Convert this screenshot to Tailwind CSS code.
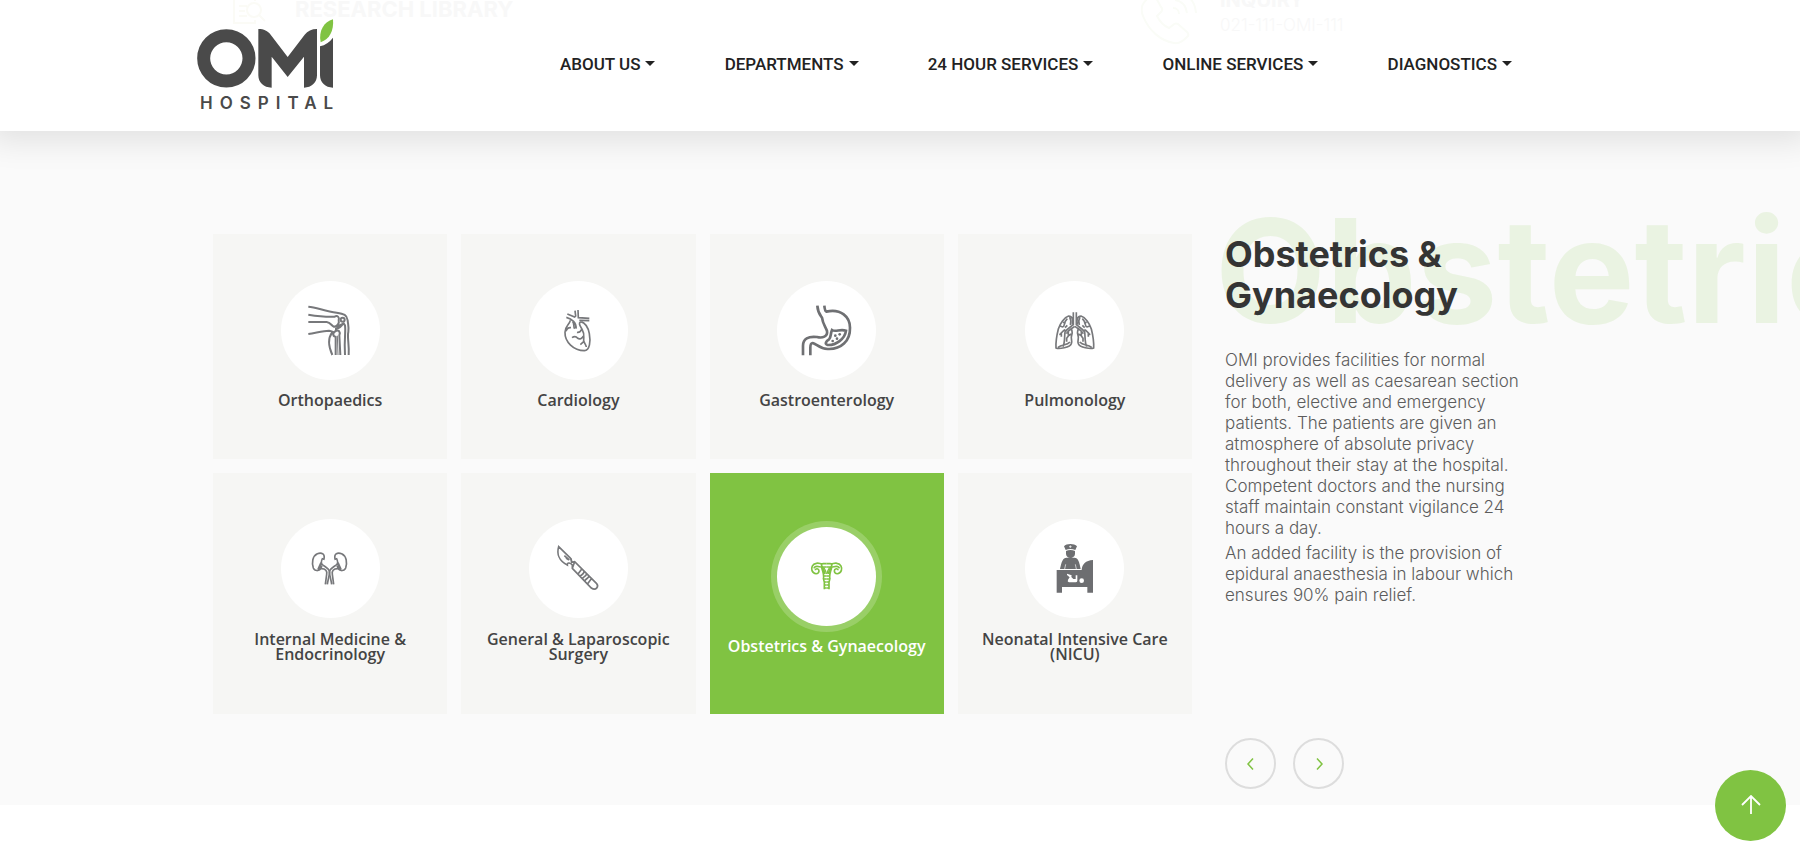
<!DOCTYPE html>
<html lang="en">
<head>
<meta charset="utf-8">
<meta name="viewport" content="width=device-width, initial-scale=1">
<title>OMI Hospital</title>
<script src="https://cdn.jsdelivr.net/npm/@tailwindcss/browser@4"></script>
</head>
<body class="bg-white font-['Inter',sans-serif] text-[#343434] overflow-x-hidden">

<header class="relative z-10 bg-white shadow-[0_0_30px_10px_rgba(0,0,0,0.1)]">
  <!-- Contact strip fading out behind the bar -->
  <div class="absolute inset-x-0 top-0 h-12 overflow-hidden pointer-events-none text-[#f8f8f8]">
    <div class="absolute left-[233px] -top-[7px] flex items-center gap-[29px]">
      <svg class="w-[33px] h-[30px]" viewBox="0 0 33 30" fill="none" stroke="#fbfbf6" stroke-width="2"><path d="M22 26v3H1V1h21v6M6 12h8M6 17h6M6 22h8"/><circle cx="21" cy="16" r="7"/><path d="M26 21l6 6"/></svg>
      <span class="text-[22px] leading-8 font-bold">RESEARCH LIBRARY</span>
    </div>
    <div class="absolute left-[1141px] -top-3 flex gap-[22px]">
      <svg class="w-[57px] h-[57px]" viewBox="0 0 57 57" fill="none" stroke="#fafcf7" stroke-width="2"><path d="M12 6c-9 7-14 12-10 22 6 15 18 25 31 27 6 1 10-3 14-7 1-2 0-3-1-4l-9-8c-2-1-3-1-5 1l-4 3c-5-2-9-6-12-12l4-4c2-2 1-4 0-5l-6-11M32 20c4 0 6 3 6 6M34 12c7 1 11 6 12 13M36 4c11 1 18 9 19 21"/></svg>
      <div><p class="text-xl leading-6 font-bold">INQUIRY</p><p class="text-[17px] leading-[26px] font-light">021-111-OMI-111</p></div>
    </div>
  </div>

  <div class="relative flex h-[131px] items-center pl-[197px] pr-[288px] pb-1">
    <a href="#" aria-label="OMI Hospital" class="block w-[138px] pt-0.5 text-[#4a4a4a]">
      <svg class="block w-[138px] h-[70px]" viewBox="51 57 414 210" aria-hidden="true">
        <circle cx="139" cy="175" r="68" fill="none" stroke="#4a4a4a" stroke-width="39"/>
        <path fill="#4a4a4a" d="M235 87C252 87 263 93 272 104L323 171L374 104C383 93 395 87 411 87V226C411 247 395 263 372 263V170L323 231L275 170V263C251 263 235 247 235 226Z"/>
        <path fill="#4a4a4a" d="M420 139Q444 133 459 113V263C436 263 420 247 420 226Z"/>
        <path fill="#80c342" d="M422 127C415 93 432 65 459 58C462 92 449 118 422 127Z"/>
      </svg>
      <span class="block pl-[3px] pt-1.5 text-[17px] leading-4 font-semibold tracking-[7px] whitespace-nowrap">HOSPITAL</span>
    </a>
    <nav class="ml-auto flex items-center justify-between w-[952px] font-['Roboto',sans-serif] text-[17px] leading-6 font-medium text-[#222]">
      <a href="#" class="flex items-center gap-[5px]">ABOUT US <span class="border-x-[5px] border-t-[5px] border-x-transparent border-t-[#222]"></span></a>
      <a href="#" class="flex items-center gap-[5px]">DEPARTMENTS <span class="border-x-[5px] border-t-[5px] border-x-transparent border-t-[#222]"></span></a>
      <a href="#" class="flex items-center gap-[5px]">24 HOUR SERVICES <span class="border-x-[5px] border-t-[5px] border-x-transparent border-t-[#222]"></span></a>
      <a href="#" class="flex items-center gap-[5px]">ONLINE SERVICES <span class="border-x-[5px] border-t-[5px] border-x-transparent border-t-[#222]"></span></a>
      <a href="#" class="flex items-center gap-[5px]">DIAGNOSTICS <span class="border-x-[5px] border-t-[5px] border-x-transparent border-t-[#222]"></span></a>
    </nav>
  </div>
</header>

<main class="flex gap-[33px] bg-[#fafafa] pl-[213px] pt-[103px] pb-4 overflow-hidden">
  <div class="grid w-[979px] shrink-0 grid-cols-4 grid-rows-[225px_241px] content-start gap-[14px] font-['Open_Sans',sans-serif] text-base leading-[15px] font-semibold text-[#444]">

    <button type="button" class="flex flex-col items-center bg-[#f6f6f4] px-4 pt-[47px]">
      <svg class="size-[99px] shrink-0 rounded-full bg-white" viewBox="243 182 297 297" fill="none" stroke="#77787b" stroke-width="6" aria-hidden="true">
        <path d="M325 259C350 261 375 273 410 277C432 280 441 284 443 300C444 312 447 318 445 335C441 350 448 370 446 404M325 283C350 287 380 290 404 289C412 284 419 290 416 300C419 310 411 319 401 319C394 316 392 306 380 305H325M325 341C350 337 370 331 387 331C405 334 402 341 396 337C383 355 387 382 397 404M404 319C418 319 423 313 431 309L435 315C438 335 432 350 435 404M405 326C418 326 422 318 428 312M407 404V350C396 346 399 336 407 332C416 328 422 334 418 345L421 404"/>
        <path stroke-width="3" d="M412 346L414 404"/>
        <circle cx="428" cy="298" r="6"/>
      </svg>
      <span class="mt-[13px]">Orthopaedics</span>
    </button>

    <button type="button" class="flex flex-col items-center bg-[#f6f6f4] px-4 pt-[47px]">
      <svg class="size-[99px] shrink-0 rounded-full bg-white" viewBox="207 182 297 297" fill="none" stroke="#77787b" stroke-width="5" aria-hidden="true">
        <path d="M322 281L344 290L347 287L345 271M354 269L355 292L388 294M388 301L358 300M319 291C336 295 350 308 348 325M338 304C344 310 339 318 344 325M331 300C328 315 315 316 315 336C314 365 341 391 373 391C390 390 392 363 388 340C384 319 377 308 362 304C353 309 363 319 367 329C374 340 371 347 371 361C372 368 378 372 379 380M318 333C321 323 326 321 333 322M336 352C345 346 350 350 353 354C360 358 368 353 370 347M351 336C359 338 363 331 365 327M361 373L371 364"/>
      </svg>
      <span class="mt-[13px]">Cardiology</span>
    </button>

    <button type="button" class="flex flex-col items-center bg-[#f6f6f4] px-4 pt-[47px]">
      <svg class="size-[99px] shrink-0 rounded-full bg-white" viewBox="231 182 297 297" fill="none" stroke="#6f7073" stroke-width="8" aria-hidden="true">
        <path d="M352 256C353 276 358 281 366 292C368 310 377 320 381 332C384 349 367 354 351 350C325 347 309 355 309 376V405M373 256C374 267 375 272 379 274C423 264 450 290 450 322C451 362 423 388 383 386C359 385 350 371 338 368C331 368 331 375 331 382V405M396 329C407 336 420 325 438 331C435 356 408 375 383 374C372 371 379 362 387 357C394 350 391 340 396 329Z"/>
        <g fill="#6f7073" stroke="none"><circle cx="406" cy="346" r="4"/><circle cx="419" cy="342" r="4"/><circle cx="398" cy="362" r="4"/><circle cx="411" cy="355" r="4"/></g>
      </svg>
      <span class="mt-[13px]">Gastroenterology</span>
    </button>

    <button type="button" class="flex flex-col items-center bg-[#f6f6f4] px-4 pt-[47px]">
      <svg class="size-[99px] shrink-0 rounded-full bg-white" viewBox="225 182 297 297" fill="none" stroke="#77787b" stroke-width="5" aria-hidden="true">
        <g id="lung">
          <path d="M370 276V313C361 321 353 323 345 335C343 351 345 366 339 379M374 318C365 326 357 326 349 340M367 313C370 298 367 287 356 287C343 291 330 310 325 326C320 346 317 366 318 383C327 387 360 381 364 370C368 360 361 355 365 345C369 335 365 332 365 327M324 381C337 372 350 376 360 365M352 295C340 306 345 320 338 320L330 317M352 315L345 322M347 309L339 306M346 328C338 330 335 340 328 343M334 336V349M355 331V347L350 354V364M364 341L355 346"/>
          <path d="M359 290C363 297 363 307 361 314" />
        </g>
        <use href="#lung" transform="matrix(-1 0 0 1 749 0)"/>
      </svg>
      <span class="mt-[13px]">Pulmonology</span>
    </button>

    <button type="button" class="flex flex-col items-center bg-[#f6f6f4] px-4 pt-[46px]">
      <svg class="size-[99px] shrink-0 rounded-full bg-white" viewBox="243 177 297 297" fill="none" stroke="#77787b" stroke-width="5" aria-hidden="true">
        <g id="kidney">
          <path d="M371 300C377 282 365 276 352 281C337 288 335 308 340 324C344 334 356 334 364 325M368 294C364 302 362 310 367 314C376 321 388 325 389 337C387 351 383 363 382 373M363 308L354 328M363 313L359 328M366 318L361 327M364 326C377 326 382 333 380 343L376 373"/>
        </g>
        <use href="#kidney" transform="matrix(-1 0 0 1 777 0)"/>
      </svg>
      <span class="mt-[14px]">Internal Medicine &amp; Endocrinology</span>
    </button>

    <button type="button" class="flex flex-col items-center bg-[#f6f6f4] px-4 pt-[46px]">
      <svg class="size-[99px] shrink-0 rounded-full bg-white" viewBox="987 177 297 297" fill="none" stroke="#77787b" stroke-width="5" aria-hidden="true">
        <path d="M1076 260C1070 280 1076 302 1102 315C1101 305 1112 309 1117 315V325L1174 384C1188 394 1197 379 1190 371L1124 305L1115 307L1112 295ZM1076 260L1112 295M1124 305L1117 325M1113 296L1116 309M1093 287L1108 300M1098 294L1105 299M1146 326L1134 342M1153 333C1151 343 1147 343 1141 348M1160 341C1157 350 1152 349 1148 355M1167 348C1164 356 1158 356 1155 362M1175 355L1163 371"/>
      </svg>
      <span class="mt-[14px]">General &amp; Laparoscopic Surgery</span>
    </button>

    <button type="button" aria-pressed="true" class="flex flex-col items-center bg-[#80c342] px-4 pt-[54px] text-white">
      <svg class="size-[99px] shrink-0 rounded-full bg-white ring-6 ring-white/20" viewBox="231 201 297 297" fill="none" stroke="#80c342" stroke-width="5" aria-hidden="true">
        <g id="tube">
          <path d="M380 311H370C363 313 357 308 349 310C337 312 333 323 336 332C341 344 356 344 357 333C357 325 346 324 346 331M380 321H370C360 323 345 313 342 325M363 311C366 323 374 328 374 342M365 321C367 334 371 337 371 351C368 357 373 362 373 367V388"/>
          <path stroke-width="4" d="M371 322C376 330 379 334 379 342M371 348H380M371 357H380M373 366H380M373 375H380M373 384H380"/>
        </g>
        <use href="#tube" transform="matrix(-1 0 0 1 760 0)"/>
      </svg>
      <span class="mt-[13px] whitespace-nowrap">Obstetrics &amp; Gynaecology</span>
    </button>

    <button type="button" class="flex flex-col items-center bg-[#f6f6f4] px-4 pt-[46px]">
      <svg class="size-[99px] shrink-0 rounded-full bg-white" viewBox="975 177 297 297" fill="#6d6e71" aria-hidden="true">
        <path d="M1092 259C1099 250 1123 250 1131 259L1126 270C1116 266 1106 266 1097 270Z"/>
        <path d="M1098 273C1106 269 1117 269 1125 273V281C1125 288 1118 294 1111 294S1098 288 1098 281Z"/>
        <path d="M1080 327C1084 307 1088 293 1100 293H1123C1135 293 1138 307 1142 327Z"/>
        <path d="M1070 330H1145C1146 313 1157 301 1179 300V398H1162V381H1086V398H1070Z"/>
        <path fill="none" stroke="#fff" stroke-width="2" d="M1097 313L1094 327M1126 313L1129 327M1111 256V264M1107 260H1115"/>
        <path fill="#fff" d="M1101 341L1115 346L1114 351L1120 357H1127V346H1132V363Q1131 367 1127 367H1107Q1101 365 1104 359L1109 352L1101 345Z"/>
        <circle cx="1145" cy="362" r="7" fill="#fff"/>
      </svg>
      <span class="mt-[14px]">Neonatal Intensive Care (NICU)</span>
    </button>
  </div>

  <section class="relative min-w-0 flex-1">
    <div aria-hidden="true" class="absolute -left-[10px] -top-[47px] text-[144px] leading-[168px] font-bold whitespace-nowrap text-[#eaf3e2]">Obstetrics &amp; Gynaecology</div>
    <div class="relative flex h-full w-[300px] flex-col">
      <h2 class="text-4xl leading-[41px] font-bold">Obstetrics &amp; Gynaecology</h2>
      <p class="mt-[34px] text-[17px] leading-[21px] font-light whitespace-nowrap text-[#5c5c5c]">OMI provides facilities for normal<br>delivery as well as caesarean section<br>for both, elective and emergency<br>patients. The patients are given an<br>atmosphere of absolute privacy<br>throughout their stay at the hospital.<br>Competent doctors and the nursing<br>staff maintain constant vigilance 24<br>hours a day.</p>
      <p class="mt-1 text-[17px] leading-[21px] font-light whitespace-nowrap text-[#5c5c5c]">An added facility is the provision of<br>epidural anaesthesia in labour which<br>ensures 90% pain relief.</p>
      <div class="mt-[132px] flex gap-[17px]">
        <button type="button" aria-label="Previous" class="grid size-[51px] place-items-center rounded-full border-2 border-[#ddd]">
          <svg class="size-3" viewBox="0 0 12 12" fill="none" stroke="#80c342" stroke-width="1.5"><path d="M8 0.5L3 6L8 11.5"/></svg>
        </button>
        <button type="button" aria-label="Next" class="grid size-[51px] place-items-center rounded-full border-2 border-[#ddd]">
          <svg class="size-3" viewBox="0 0 12 12" fill="none" stroke="#80c342" stroke-width="1.5"><path d="M4 0.5L9 6L4 11.5"/></svg>
        </button>
      </div>
    </div>
  </section>
</main>

<a href="#" aria-label="Back to top" class="fixed bottom-[11px] right-[14px] z-20 grid size-[71px] place-items-center rounded-full bg-[#80c342] pb-0.5">
  <svg class="h-5 w-5" viewBox="0 0 20 20" fill="none" stroke="#fff" stroke-width="1.8"><path d="M10 19V1M1 10L10 1L19 10"/></svg>
</a>
</body>
</html>
